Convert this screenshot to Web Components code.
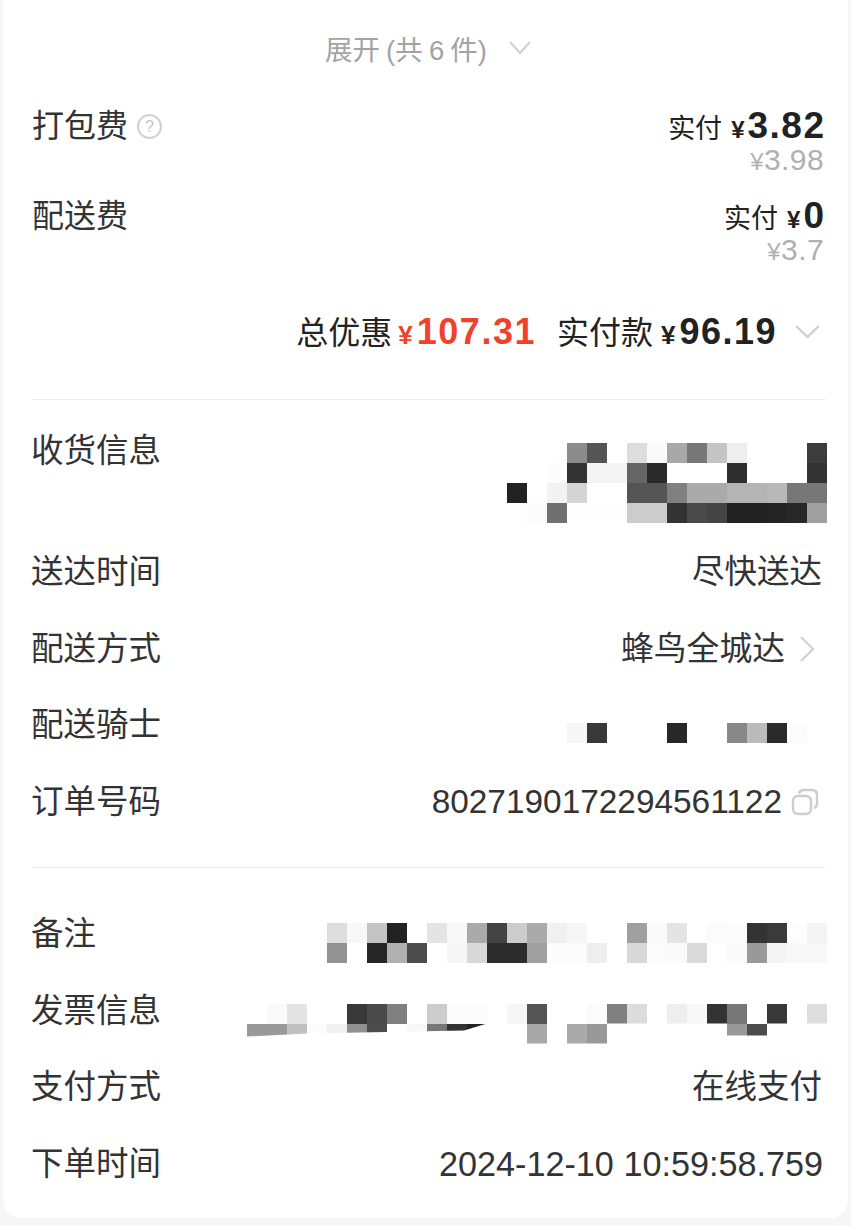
<!DOCTYPE html>
<html lang="zh">
<head>
<meta charset="utf-8">
<title>订单详情</title>
<style>
  html, body { margin: 0; background: #f6f6f6; }
  body { font-family: "Liberation Sans", "Noto Sans CJK SC", sans-serif; color: #333; }
</style>
</head>
<body>

<order-card>
  <expand-row>展开 (共 6 件)</expand-row>

  <fee-row label="打包费" paid="3.82" original="3.98" hint></fee-row>
  <fee-row label="配送费" paid="0" original="3.7" style="margin-top: 22px"></fee-row>

  <total-row discount="107.31" paid="96.19"></total-row>
  <line-rule style="margin: 45px 0 13px"></line-rule>

  <info-row label="收货信息" style="--row-h: 121px">
    <pixel-block cols="16" top="30" cells="
      .,.,.,8c8c8c,555,.,ddd,fafafa,a8a8a8,777,c4c4c4,eee,.,.,.,3c3c3c,
      .,.,fcfcfc,333,f4f4f4,f4f4f4,666,2a2a2a,.,.,.,2e2e2e,.,.,.,333,
      222,.,f2f2f2,d4d4d4,.,.,555,555,808080,aaa,aaa,b4b4b4,b4b4b4,b8b8b8,777,777,
      .,fbfbfb,707070,fefefe,fefefe,fefefe,ccc,ccc,333,4a4a4a,444,222,222,252525,282828,a0a0a0"></pixel-block>
  </info-row>
  <info-row label="送达时间"><span style="margin-right: 2px">尽快送达</span></info-row>
  <info-row label="配送方式"><span style="font-size: 32.8px">蜂鸟全城达</span><chevron-icon dir="right" style="margin-left: 15px; margin-right: 10px"></chevron-icon></info-row>
  <info-row label="配送骑士">
    <pixel-block cols="13" top="36" cells="f6f6f6,383838,.,.,.,282828,.,.,888,bbb,2a2a2a,fcfcfc,."></pixel-block>
  </info-row>
  <info-row label="订单号码"><span style="font-size: 33.4px">8027190172294561122</span><copy-icon></copy-icon></info-row>

  <line-rule style="margin: 27px 0 28px"></line-rule>

  <info-row label="备注">
    <pixel-block cols="25" top="27" cells="
      ddd,f8f8f8,c4c4c4,222,.,e4e4e4,f8f8f8,aaa,444,ccc,aaa,f0f0f0,f6f6f6,.,.,a0a0a0,fafafa,e4e4e4,.,fbfbfb,fcfcfc,333,3a3a3a,fdfdfd,f4f4f4,
      929292,.,262626,b0b0b0,4c4c4c,.,f6f6f6,d8d8d8,2c2c2c,2c2c2c,a0a0a0,fcfcfc,fbfbfb,eee,.,d8d8d8,fbfbfb,fafafa,dadada,.,fafafa,999,f4f4f4,f8f8f8,f8f8f8"></pixel-block>
  </info-row>
  <info-row label="发票信息">
    <pixel-block cols="29" top="31"
      clip="polygon(0 0, 580px 0, 580px 20px, 520px 20px, 520px 32px, 480px 32px, 480px 20px, 360px 20px, 360px 40px, 320px 40px, 320px 20px, 300px 20px, 300px 40px, 280px 40px, 280px 20px, 240px 20px, 217px 27px, 60px 30px, 0 33px)"
      cells="
      .,fafafa,e4e4e4,.,.,383838,4a4a4a,808080,.,ccc,fbfbfb,fbfbfb,.,f6f6f6,555,.,.,fbfbfb,808080,dcdcdc,.,eee,f8f8f8,333,777,.,383838,.,ddd,
      999,999,c0c0c0,fcfcfc,f0f0f0,909090,4c4c4c,.,f8f8f8,777,333,222,.,.,a8a8a8,.,aaa,999,.,.,.,.,.,.,999,4c4c4c,.,.,."></pixel-block>
  </info-row>
  <info-row label="支付方式"><span style="margin-right: 2px">在线支付</span></info-row>
  <info-row label="下单时间"><span style="font-size: 34.2px; margin-right: 1px">2024-12-10 10:59:58.759</span></info-row>
</order-card>

<script>
// small helper so every element gets an open shadow root with its own styles
function shadow(el, html) {
  el.attachShadow({ mode: 'open' }).innerHTML = html;
}

class OrderCard extends HTMLElement {
  constructor() {
    super();
    shadow(this, `<style>
      :host {
        display: block;
        box-sizing: border-box;
        height: 1218px;
        margin: 0 3px;
        padding: 0 24px 0 29px;
        background: #fff;
        border-radius: 0 0 18px 18px;
      }
    </style><slot></slot>`);
  }
}

class ExpandRow extends HTMLElement {
  constructor() {
    super();
    shadow(this, `<style>
      :host {
        display: flex;
        align-items: center;
        justify-content: center;
        gap: 22px;
        height: 96px;
        font-size: 27.5px;
        word-spacing: -1.5px;
        color: #a3a3a3;
      }
    </style><span><slot></slot></span><chevron-icon dir="down"></chevron-icon>`);
  }
}

class FeeRow extends HTMLElement {
  constructor() {
    super();
    const hint = this.hasAttribute('hint') ? '<span class="hint">?</span>' : '';
    shadow(this, `<style>
      :host {
        display: flex;
        justify-content: space-between;
        margin-top: 8px;
      }
      .label { display: flex; align-items: center; height: 44px; font-size: 32px; line-height: 44px; }
      .hint {
        box-sizing: border-box;
        width: 25px;
        height: 25px;
        margin-left: 9px;
        border: 2px solid #d0d0d0;
        border-radius: 50%;
        color: #c4c4c4;
        font-size: 16px;
        line-height: 21px;
        text-align: center;
      }
      .right { text-align: right; }
      .paid { display: flex; align-items: baseline; justify-content: flex-end; height: 44px; line-height: 44px; font-size: 27px; color: #222; }
      .yen { font-size: 24px; font-weight: bold; margin-left: 9px; margin-right: 3px; }
      .num { font-size: 37px; font-weight: bold; letter-spacing: 1.5px; margin-right: -1.5px; }
      .was { height: 24px; line-height: 24px; font-size: 30px; letter-spacing: .4px; color: #b0b0b0; }
      .was i { font-style: normal; font-size: 24px; }
    </style>
    <div class="label">${this.getAttribute('label')}${hint}</div>
    <div class="right">
      <div class="paid">实付<span class="yen">¥</span><span class="num">${this.getAttribute('paid')}</span></div>
      <div class="was"><i>¥</i>${this.getAttribute('original')}</div>
    </div>`);
  }
}

class TotalRow extends HTMLElement {
  constructor() {
    super();
    shadow(this, `<style>
      :host {
        display: flex;
        align-items: baseline;
        justify-content: flex-end;
        height: 44px;
        margin-top: 48px;
        line-height: 44px;
        font-size: 32px;
        color: #222;
      }
      .yen { font-size: 26px; font-weight: bold; margin: 0 4px 0 6px; }
      .num { font-size: 36px; font-weight: bold; letter-spacing: 1.5px; }
      .red { color: #f0412a; }
      .gap { margin-left: 21px; }
      .after-gap { margin-left: 8px; }
      chevron-icon { margin: 0 4px 0 18px; align-self: center; }
    </style>
    <span>总优惠</span><span class="yen red">¥</span><span class="num red">${this.getAttribute('discount')}</span>
    <span class="gap">实付款</span><span class="yen after-gap">¥</span><span class="num">${this.getAttribute('paid')}</span>
    <chevron-icon dir="down" size="25"></chevron-icon>`);
  }
}

class InfoRow extends HTMLElement {
  constructor() {
    super();
    shadow(this, `<style>
      :host {
        display: flex;
        justify-content: space-between;
        height: var(--row-h, 76.5px);
        font-size: 32.5px;
        line-height: 76px;
        color: #333;
      }
      .label { margin-left: -1px; }
      .value { display: flex; align-items: center; height: 76px; }
    </style>
    <div class="label">${this.getAttribute('label')}</div>
    <div class="value"><slot></slot></div>`);
  }
}

class LineRule extends HTMLElement {
  constructor() {
    super();
    shadow(this, `<style>
      :host { display: block; height: 1px; background: #eeeeee; margin-right: -2px !important; }
    </style>`);
  }
}

// censored areas in the shot, one 20px cell per colour, "." is blank
class PixelBlock extends HTMLElement {
  constructor() {
    super();
    const cols = this.getAttribute('cols');
    const cells = this.getAttribute('cells').split(',').map(c => c.trim());
    const html = cells.map(c => `<b style="background:${c === '.' ? 'transparent' : '#' + c}"></b>`).join('');
    const clip = this.getAttribute('clip');
    shadow(this, `<style>
      :host {
        display: grid;
        grid-template-columns: repeat(${cols}, 20px);
        grid-auto-rows: 20px;
        align-self: flex-start;
        margin-top: ${this.getAttribute('top')}px;
        margin-right: -3px;
        ${clip ? 'clip-path:' + clip + ';' : ''}
      }
    </style>${html}`);
  }
}

class ChevronIcon extends HTMLElement {
  constructor() {
    super();
    const right = this.getAttribute('dir') === 'right';
    const w = this.getAttribute('size') || 22;
    shadow(this, `<style>
      :host { display: inline-flex; flex: none; }
      svg { display: block; fill: none; stroke: #cfcfcf; stroke-width: 2; }
    </style>` + (right
      ? '<svg width="14" height="26" viewBox="0 0 14 26"><path d="M1 1l12 12L1 25"/></svg>'
      : `<svg width="${w}" height="14" viewBox="0 0 22 14" preserveAspectRatio="none"><path d="M1 1l10 11L21 1"/></svg>`));
  }
}

class CopyIcon extends HTMLElement {
  constructor() {
    super();
    shadow(this, `<style>
      :host { display: inline-flex; flex: none; margin-left: 9px; margin-right: 5px; }
      svg { display: block; fill: none; stroke: #cdcdcd; stroke-width: 2.4; }
    </style>
    <svg width="28" height="28" viewBox="0 0 28 28">
      <rect x="2" y="8" width="18" height="18" rx="5"/>
      <path d="M8 5.5C8.5 3.2 10 2 12.500 2H21c3 0 5 2 5 5v8.500c0 2.300-1 3.800-3 4.500"/>
    </svg>`);
  }
}

customElements.define('order-card', OrderCard);
customElements.define('expand-row', ExpandRow);
customElements.define('fee-row', FeeRow);
customElements.define('total-row', TotalRow);
customElements.define('info-row', InfoRow);
customElements.define('line-rule', LineRule);
customElements.define('pixel-block', PixelBlock);
customElements.define('chevron-icon', ChevronIcon);
customElements.define('copy-icon', CopyIcon);
</script>
</body>
</html>
